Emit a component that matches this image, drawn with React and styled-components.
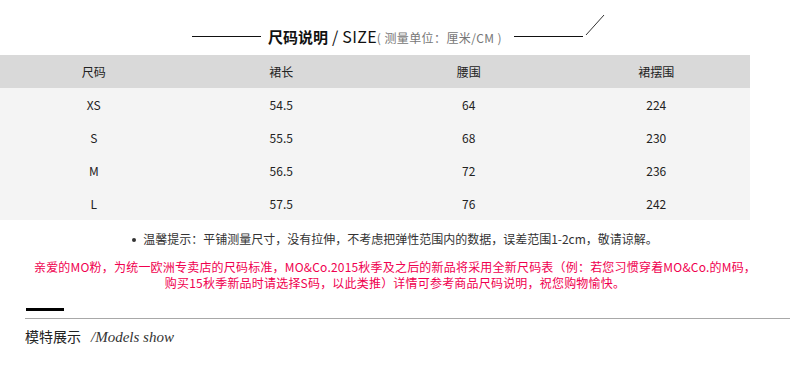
import styled, { createGlobalStyle } from "styled-components";

const GlobalStyle = createGlobalStyle`
  body {
    margin: 0;
    background: #fff;
    font-family: "Noto Sans CJK SC", "Noto Sans", sans-serif;
  }
`;

const Page = styled.div`
  width: 790px;
  height: 365px;
  overflow: hidden;
`;

const TitleBar = styled.div`
  height: 55px;
  box-sizing: border-box;
  padding: 26px 0 8px 192px;
  display: flex;
  align-items: center;
`;

const Rule = styled.span`
  width: 69px;
  height: 1px;
  background: #111;
  margin: ${(p) => p.$margin};
`;

const Title = styled.span`
  font-size: 15px;
  line-height: 20px;
  color: #111;
  white-space: nowrap;
  b {
    font-weight: 700;
  }
`;

const En = styled.span`
  font-size: 16px;
  letter-spacing: 0.3px;
`;

const Unit = styled.span`
  font-size: 12px;
  letter-spacing: 0.4px;
  color: #777;
`;

const Slash = styled.svg`
  align-self: flex-start;
  margin: -12px 0 0 2px;
`;

const Table = styled.div`
  width: 750px;
  display: grid;
  grid-template-columns: repeat(4, 1fr);
  font-size: 12px;
  color: #222;
`;

const Cell = styled.div`
  height: 33px;
  display: flex;
  align-items: center;
  justify-content: center;
  background: ${(p) => (p.$head ? "#d9d9d9" : "#f4f4f4")};
`;

const Notes = styled.div`
  padding-top: 10px;
  text-align: center;
  font-size: 12px;
`;

const Tip = styled.div`
  line-height: 18px;
  color: #333;
  &::before {
    content: "";
    display: inline-block;
    width: 4px;
    height: 4px;
    border-radius: 50%;
    background: #333;
    margin: 0 7px 2px 0;
    vertical-align: middle;
  }
`;

const Warning = styled.div`
  margin-top: 11px;
  line-height: 16px;
  letter-spacing: 0.2px;
  color: #f0004f;
`;

const Section = styled.div`
  padding: 17px 0 0 25px;
`;

const Bar = styled.div`
  width: 38px;
  height: 3px;
  background: #000;
  margin-left: 1px;
`;

const Divider = styled.div`
  height: 1px;
  background: #a8a8a8;
  margin-top: 7px;
`;

const Heading = styled.div`
  display: flex;
  align-items: baseline;
  gap: 10px;
  margin-top: 7px;
  font-size: 14px;
  line-height: 20px;
  color: #222;
`;

const Sub = styled.span`
  font-family: "Liberation Serif", serif;
  font-style: italic;
  font-size: 15px;
  color: #333;
`;

const head = ["尺码", "裙长", "腰围", "裙摆围"];
const rows = [
  ["XS", "54.5", "64", "224"],
  ["S", "55.5", "68", "230"],
  ["M", "56.5", "72", "236"],
  ["L", "57.5", "76", "242"],
];

export default function App() {
  return (
    <Page>
      <GlobalStyle />
      <TitleBar>
        <Rule $margin="0 7px 0 0" />
        <Title>
          <b>尺码说明</b>
          <En> / SIZE</En>
          <Unit>( 测量单位：厘米/CM )</Unit>
        </Title>
        <Rule $margin="0 0 0 12px" />
        <Slash width="20" height="22" viewBox="0 0 20 22">
          <line x1="1" y1="21" x2="19" y2="1" stroke="#333" strokeWidth="1" />
        </Slash>
      </TitleBar>
      <Table>
        {head.map((h) => (
          <Cell key={h} $head>
            {h}
          </Cell>
        ))}
        {rows.map((r) =>
          r.map((c, i) => <Cell key={r[0] + i}>{c}</Cell>)
        )}
      </Table>
      <Notes>
        <Tip>温馨提示：平铺测量尺寸，没有拉伸，不考虑把弹性范围内的数据，误差范围1-2cm，敬请谅解。</Tip>
        <Warning>
          亲爱的MO粉，为统一欧洲专卖店的尺码标准，MO&amp;Co.2015秋季及之后的新品将采用全新尺码表（例：若您习惯穿着MO&amp;Co.的M码，
          <br />
          购买15秋季新品时请选择S码，以此类推）详情可参考商品尺码说明，祝您购物愉快。
        </Warning>
      </Notes>
      <Section>
        <Bar />
        <Divider />
        <Heading>
          模特展示<Sub>/Models show</Sub>
        </Heading>
      </Section>
    </Page>
  );
}
